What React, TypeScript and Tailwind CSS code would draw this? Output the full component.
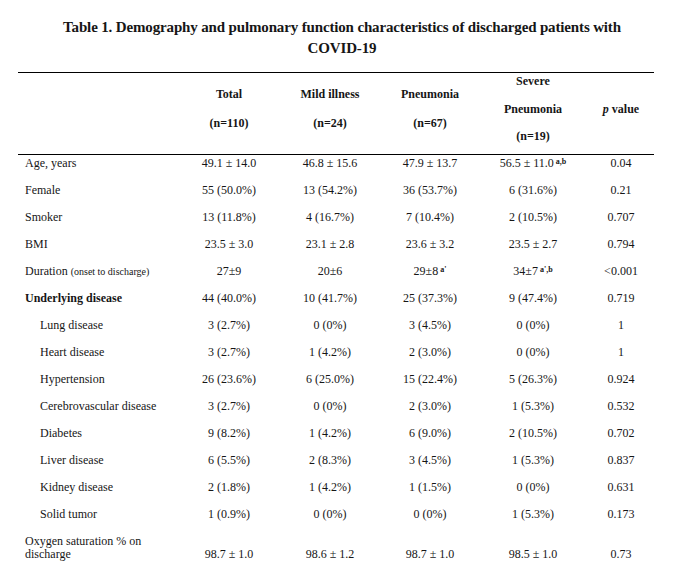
type Row = {
  label: React.ReactNode;
  indent?: boolean;
  bold?: boolean;
  values: React.ReactNode[];
};

const Sup = ({ children }: { children: React.ReactNode }) => (
  <sup className="relative -top-[3px] ml-[2px] align-baseline text-[8px] font-bold">{children}</sup>
);

const rows: Row[] = [
  { label: "Age, years", values: ["49.1 ± 14.0", "46.8 ± 15.6", "47.9 ± 13.7", <>56.5 ± 11.0<Sup>a,b</Sup></>, "0.04"] },
  { label: "Female", values: ["55 (50.0%)", "13 (54.2%)", "36 (53.7%)", "6 (31.6%)", "0.21"] },
  { label: "Smoker", values: ["13 (11.8%)", "4 (16.7%)", "7 (10.4%)", "2 (10.5%)", "0.707"] },
  { label: "BMI", values: ["23.5 ± 3.0", "23.1 ± 2.8", "23.6 ± 3.2", "23.5 ± 2.7", "0.794"] },
  {
    label: (
      <>
        Duration <span className="text-[10px]">(onset to discharge)</span>
      </>
    ),
    values: ["27±9", "20±6", <>29±8<Sup>a'</Sup></>, <>34±7<Sup>a',b</Sup></>, "<0.001"],
  },
  { label: "Underlying disease", bold: true, values: ["44 (40.0%)", "10 (41.7%)", "25 (37.3%)", "9 (47.4%)", "0.719"] },
  { label: "Lung disease", indent: true, values: ["3 (2.7%)", "0 (0%)", "3 (4.5%)", "0 (0%)", "1"] },
  { label: "Heart disease", indent: true, values: ["3 (2.7%)", "1 (4.2%)", "2 (3.0%)", "0 (0%)", "1"] },
  { label: "Hypertension", indent: true, values: ["26 (23.6%)", "6 (25.0%)", "15 (22.4%)", "5 (26.3%)", "0.924"] },
  { label: "Cerebrovascular disease", indent: true, values: ["3 (2.7%)", "0 (0%)", "2 (3.0%)", "1 (5.3%)", "0.532"] },
  { label: "Diabetes", indent: true, values: ["9 (8.2%)", "1 (4.2%)", "6 (9.0%)", "2 (10.5%)", "0.702"] },
  { label: "Liver disease", indent: true, values: ["6 (5.5%)", "2 (8.3%)", "3 (4.5%)", "1 (5.3%)", "0.837"] },
  { label: "Kidney disease", indent: true, values: ["2 (1.8%)", "1 (4.2%)", "1 (1.5%)", "0 (0%)", "0.631"] },
  { label: "Solid tumor", indent: true, values: ["1 (0.9%)", "0 (0%)", "0 (0%)", "1 (5.3%)", "0.173"] },
];

const grid = "grid grid-cols-[162px_98px_104px_96px_110px_66px]";

export default function App() {
  return (
    <div className="min-h-[572px] w-[675px] bg-white font-['Liberation_Serif',serif] text-[#161616]">
      <div className="pl-[9px] pt-[17px] text-center text-[15px] leading-[21px] font-bold tracking-[-0.15px]">
        <div>Table 1. Demography and pulmonary function characteristics of discharged patients with</div>
        <div>COVID-19</div>
      </div>

      <div className="ml-[18px] mt-[13px] w-[636px] border-t border-black">
        {/* header */}
        <div className={`${grid} h-[81px] items-center pb-[10px] text-[12px] leading-[16px] font-bold`}>
          <div />
          <div className="flex flex-col items-center gap-[13px]">
            <span>Total</span>
            <span>(n=110)</span>
          </div>
          <div className="flex flex-col items-center gap-[13px]">
            <span>Mild illness</span>
            <span>(n=24)</span>
          </div>
          <div className="flex flex-col items-center gap-[13px]">
            <span>Pneumonia</span>
            <span>(n=67)</span>
          </div>
          <div className="flex flex-col items-center gap-[11.5px]">
            <span>Severe</span>
            <span>Pneumonia</span>
            <span>(n=19)</span>
          </div>
          <div className="text-center">
            <i>p</i> value
          </div>
        </div>

        <div className="border-t border-black text-[12px] leading-[16px]">
          {rows.map((r, i) => (
            <div key={i} className={`${grid} h-[27px]`}>
              <div className={`${r.indent ? "pl-[22px]" : "pl-[7px]"} ${r.bold ? "font-bold" : ""} whitespace-nowrap`}>
                {r.label}
              </div>
              {r.values.map((v, j) => (
                <div key={j} className="whitespace-nowrap text-center">
                  {v}
                </div>
              ))}
            </div>
          ))}
          <div className={`${grid} mt-[2px] items-end leading-[13px]`}>
            <div className="pl-[7px]">
              Oxygen saturation % on
              <br />
              discharge
            </div>
            <div className="text-center">98.7 ± 1.0</div>
            <div className="text-center">98.6 ± 1.2</div>
            <div className="text-center">98.7 ± 1.0</div>
            <div className="text-center">98.5 ± 1.0</div>
            <div className="text-center">0.73</div>
          </div>
        </div>
      </div>
    </div>
  );
}
